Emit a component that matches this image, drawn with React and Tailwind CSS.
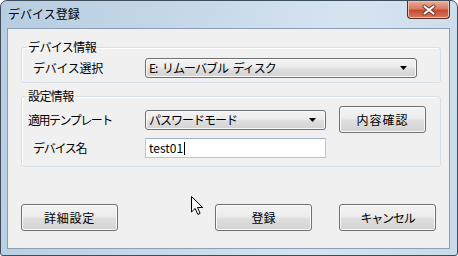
import React from 'react';

const font = { fontFamily: '"Noto Sans CJK JP", "Liberation Sans", sans-serif' };

const btnBg =
  'bg-[linear-gradient(to_bottom,#f3f3f3_0%,#ececec_45%,#dedede_55%,#d3d3d3_100%)]';

function Button({ children, className = '', track = '' }) {
  return (
    <div
      className={`h-[27px] flex items-center justify-center rounded-[3px] border border-[#707070] shadow-[inset_0_0_0_1px_#fbfbfb] ${btnBg} text-[12px] leading-[14px] text-black ${className}`}
    >
      <span className={track}>{children}</span>
    </div>
  );
}

function Combo({ value, className = '' }) {
  return (
    <div
      className={`h-[20px] flex items-center justify-between rounded-[3px] border border-[#707070] shadow-[inset_0_0_0_1px_#fbfbfb] ${btnBg} pl-[3px] pr-[8px] text-[12px] leading-[14px] text-black ${className}`}
    >
      <span className="tracking-[-1px] [word-spacing:3px]">{value}</span>
      <svg width="8" height="4" viewBox="0 0 8 4">
        <path d="M0 0h7L3.5 4z" fill="#000" />
      </svg>
    </div>
  );
}

function Group({ title, className = '', children }) {
  return (
    <fieldset
      className={`ml-[13px] w-[420px] rounded-[3px] border border-[#d5dfe5] shadow-[inset_1px_1px_0_#fff] ${className}`}
    >
      <legend className="ml-[5px] px-[1px] text-[12px] leading-[14px] text-black tracking-[-0.6px]">{title}</legend>
      {children}
    </fieldset>
  );
}

export default function App() {
  return (
    <div className="w-[458px] h-[256px] bg-white" style={font}>
      <div className="relative w-[458px] h-[256px] rounded-t-[7px] rounded-b-[3px] border border-[#3f4c5a] bg-[linear-gradient(100deg,#b7cde1_0%,#c9dbeb_45%,#d6e4f0_70%,#c9dbea_100%)] overflow-hidden">
        {/* title bar */}
        <div className="h-[27px] flex justify-between">
          <div className="pl-[7px] pt-[6px] text-[12px] leading-[14px] text-black">デバイス登録</div>
          <div className="mr-[7px] w-[43px] h-[18px] flex items-center justify-center rounded-b-[4px] border border-t-0 border-[#5a2c22] bg-[linear-gradient(to_bottom,#e8ad9b_0%,#da7b63_45%,#c84a2e_55%,#d47a62_100%)] shadow-[inset_0_0_0_1px_#efbfb0]">
            <svg width="16" height="12" viewBox="0 0 16 12">
              <path d="M3.5 2.5l9 7M12.5 2.5l-9 7" stroke="#6a3428" strokeWidth="4" strokeLinecap="round" />
              <path d="M3.5 2.5l9 7M12.5 2.5l-9 7" stroke="#fff" strokeWidth="2.2" strokeLinecap="round" />
            </svg>
          </div>
        </div>

        {/* client area */}
        <div className="ml-[6px] w-[443px] h-[221px] border border-[#8a9fb5] bg-[#f0f0f0] flex flex-col">
          <Group title="デバイス情報" className="mt-[11px] h-[43px]">
            <div className="mt-[4px] pl-[11px] flex items-center">
              <div className="w-[112px] text-[12px] leading-[14px] text-black tracking-[-0.3px]">デバイス選択</div>
              <Combo value="E: リムーバブル ディスク" className="w-[272px]" />
            </div>
          </Group>

          <Group title="設定情報" className="mt-[6px] h-[78px]">
            <div className="mt-[3px] pl-[6px] flex items-center">
              <div className="w-[117px] text-[12px] leading-[14px] text-black tracking-[-1.5px]">適用テンプレート</div>
              <Combo value="パスワードモード" className="w-[181px]" />
              <Button className="ml-[13px] w-[87px]" track="tracking-[1px]">内容確認</Button>
            </div>
            <div className="mt-[5px] pl-[11px] flex items-center">
              <div className="w-[112px] text-[12px] leading-[14px] text-black tracking-[-1.3px]">デバイス名</div>
              <div className="w-[181px] h-[20px] flex items-center bg-white border border-[#b3c6da] border-t-[#a3b3c6] pl-[3px] text-[12px] leading-[14px] text-black">
                <span>test01</span>
                <span className="ml-[1px] w-[1px] h-[13px] bg-black" />
              </div>
            </div>
          </Group>

          <div className="mt-[37px] ml-[13px] flex">
            <Button className="w-[97px]" track="tracking-[0.8px]">詳細設定</Button>
            <Button className="ml-[97px] w-[97px]">登録</Button>
            <Button className="ml-[27px] w-[97px]" track="tracking-[-1.2px]">キャンセル</Button>
          </div>
        </div>

        {/* mouse pointer */}
        <svg className="absolute left-[190px] top-[195px]" width="13" height="20" viewBox="0 0 13 20">
          <path
            d="M0.5 0.5v15.5l3.7-3.6 2.6 6 2.3-1-2.6-5.9h5.2z"
            fill="#fff"
            stroke="#000"
            strokeWidth="1"
            strokeLinejoin="miter"
          />
        </svg>
      </div>
    </div>
  );
}
